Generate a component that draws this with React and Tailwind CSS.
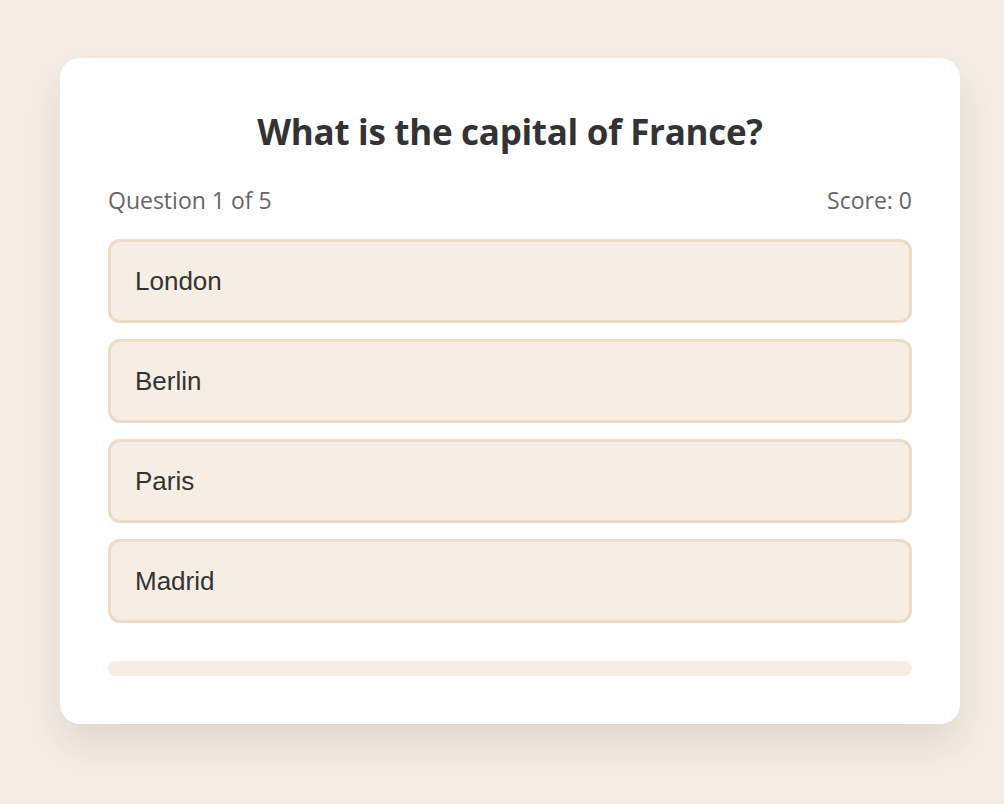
const OPTIONS = ['London', 'Berlin', 'Paris', 'Madrid']

export default function App() {
  return (
    <div className="min-h-screen bg-[#f5ede3] pt-[58px] pl-[60px]">
      <div className="w-[900px] bg-white rounded-[20px] px-12 pt-[50px] pb-12 shadow-[0_20px_40px_rgba(80,60,30,0.12)]">
        <h1 className="text-center text-[#333] font-bold text-[35px] leading-[48px] font-['Open_Sans',sans-serif] tracking-[-0.3px]">
          What is the capital of France?
        </h1>
        <div className="flex justify-between mt-[30px] text-[#666] text-[23px] leading-[28px] font-['Open_Sans',sans-serif]">
          <span>Question 1 of 5</span>
          <span>Score: 0</span>
        </div>
        <div className="flex flex-col gap-4 mt-[25px]">
          {OPTIONS.map(o => (
            <button key={o}
              className="text-left bg-[#f7eee3] border-[3px] border-[#ebdcc8] rounded-xl h-[84px] px-[24px] text-[#333] text-[26px] font-['Liberation_Sans',Arial,sans-serif]">
              {o}
            </button>
          ))}
        </div>
        <div className="mt-[38px] h-[15px] rounded-full bg-[#f7eee3]" />
      </div>
    </div>
  )
}
